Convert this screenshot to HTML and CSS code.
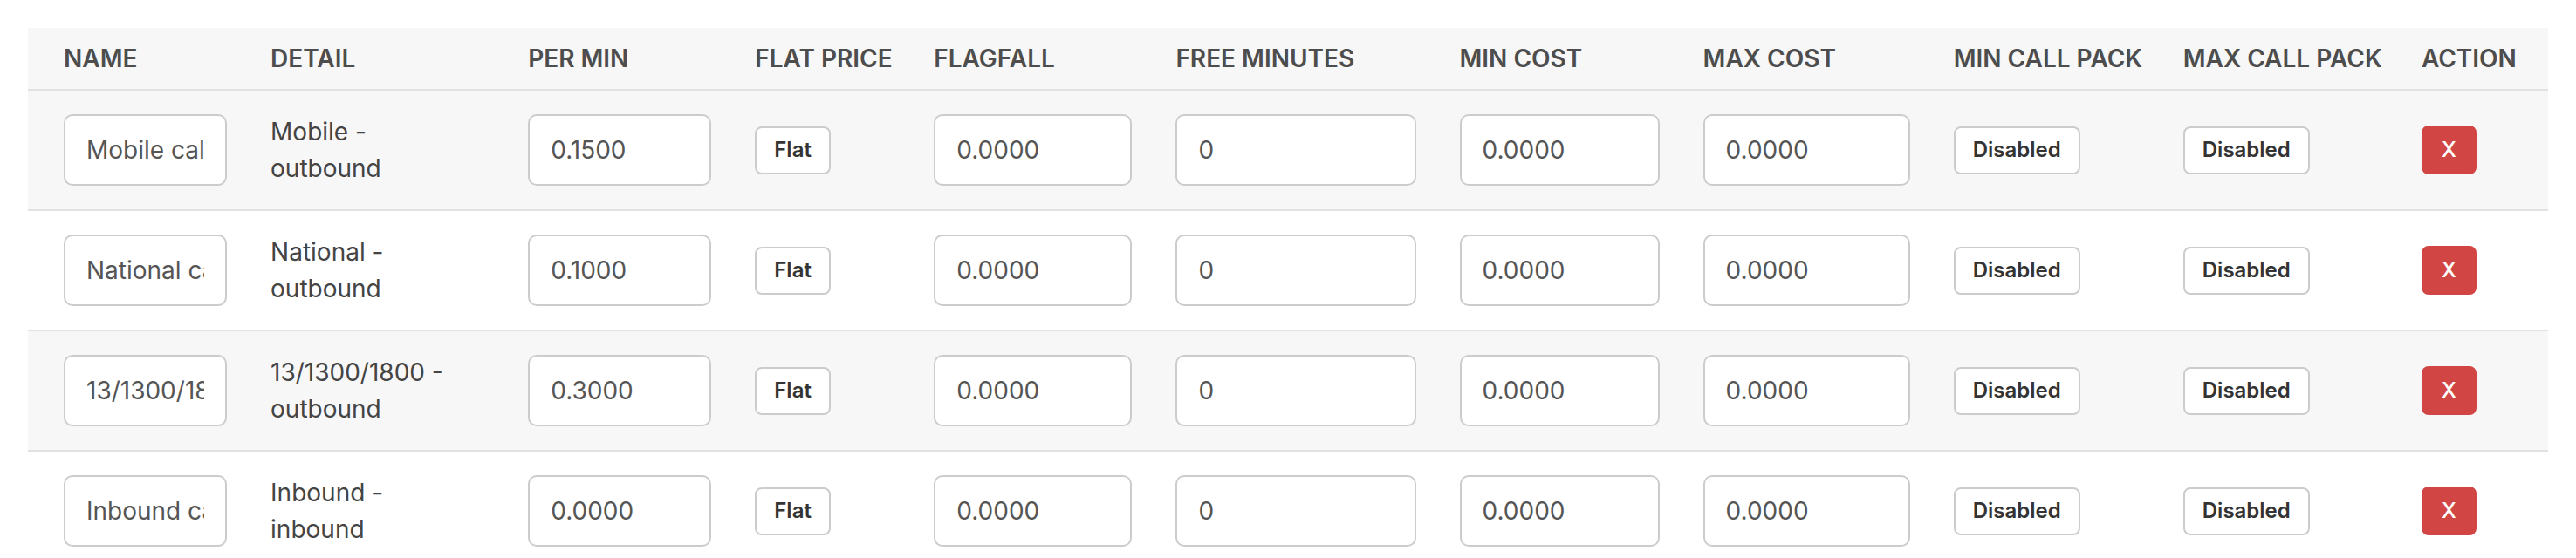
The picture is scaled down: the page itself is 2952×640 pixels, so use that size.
FILE: index.html
```html
<!DOCTYPE html>
<html lang="en">
<head>
<meta charset="utf-8">
<title>Call rates</title>
<link rel="stylesheet" href="styles.css">
</head>
<body>
<table class="rates">
  <colgroup>
    <col class="c-name"><col class="c-detail"><col class="c-permin"><col class="c-flat"><col class="c-flag">
    <col class="c-free"><col class="c-mincost"><col class="c-maxcost"><col class="c-minpack"><col class="c-maxpack"><col class="c-action">
  </colgroup>
  <thead>
    <tr>
      <th>Name</th><th>Detail</th><th>Per Min</th><th>Flat Price</th><th>Flagfall</th><th>Free Minutes</th>
      <th>Min Cost</th><th>Max Cost</th><th>Min Call Pack</th><th>Max Call Pack</th><th>Action</th>
    </tr>
  </thead>
  <tbody>
    <tr>
      <td><input class="field" type="text" value="Mobile calls"></td>
      <td><div class="detail">Mobile - outbound</div></td>
      <td><input class="field" type="text" value="0.1500"></td>
      <td><button class="btn">Flat</button></td>
      <td><input class="field" type="text" value="0.0000"></td>
      <td><input class="field" type="text" value="0"></td>
      <td><input class="field" type="text" value="0.0000"></td>
      <td><input class="field" type="text" value="0.0000"></td>
      <td><button class="btn">Disabled</button></td>
      <td><button class="btn">Disabled</button></td>
      <td><button class="btn btn-danger">X</button></td>
    </tr>
    <tr>
      <td><input class="field" type="text" value="National calls"></td>
      <td><div class="detail">National - outbound</div></td>
      <td><input class="field" type="text" value="0.1000"></td>
      <td><button class="btn">Flat</button></td>
      <td><input class="field" type="text" value="0.0000"></td>
      <td><input class="field" type="text" value="0"></td>
      <td><input class="field" type="text" value="0.0000"></td>
      <td><input class="field" type="text" value="0.0000"></td>
      <td><button class="btn">Disabled</button></td>
      <td><button class="btn">Disabled</button></td>
      <td><button class="btn btn-danger">X</button></td>
    </tr>
    <tr>
      <td><input class="field" type="text" value="13/1300/1800 calls"></td>
      <td><div class="detail">13/1300/1800 - outbound</div></td>
      <td><input class="field" type="text" value="0.3000"></td>
      <td><button class="btn">Flat</button></td>
      <td><input class="field" type="text" value="0.0000"></td>
      <td><input class="field" type="text" value="0"></td>
      <td><input class="field" type="text" value="0.0000"></td>
      <td><input class="field" type="text" value="0.0000"></td>
      <td><button class="btn">Disabled</button></td>
      <td><button class="btn">Disabled</button></td>
      <td><button class="btn btn-danger">X</button></td>
    </tr>
    <tr>
      <td><input class="field" type="text" value="Inbound calls"></td>
      <td><div class="detail">Inbound - inbound</div></td>
      <td><input class="field" type="text" value="0.0000"></td>
      <td><button class="btn">Flat</button></td>
      <td><input class="field" type="text" value="0.0000"></td>
      <td><input class="field" type="text" value="0"></td>
      <td><input class="field" type="text" value="0.0000"></td>
      <td><input class="field" type="text" value="0.0000"></td>
      <td><button class="btn">Disabled</button></td>
      <td><button class="btn">Disabled</button></td>
      <td><button class="btn btn-danger">X</button></td>
    </tr>
  </tbody>
</table>
</body>
</html>
```

FILE: styles.css
```css
html {
  overflow: hidden;
  background: #ffffff;
}

body {
  margin: 32px;
  font-family: Inter, "Noto Sans", "Liberation Sans", sans-serif;
  font-size: 28px;
  line-height: 1.5;
  color: #444444;
}

.rates {
  width: 100%;
  table-layout: fixed;
  border-collapse: collapse;
}

.c-name { width: 253px; }
.c-detail { width: 295px; }
.c-permin { width: 260px; }
.c-flat { width: 205px; }
.c-flag { width: 277px; }
.c-free { width: 325px; }
.c-mincost { width: 279px; }
.c-maxcost { width: 287px; }
.c-minpack { width: 263px; }
.c-maxpack { width: 273px; }
.c-action { width: 170px; }

.rates th {
  height: 70px;
  padding: 0 25px;
  text-align: left;
  text-transform: uppercase;
  font-weight: 600;
  font-size: 28px;
  color: #4d4d4d;
  white-space: nowrap;
  background: #f7f7f7;
  border-bottom: 2px solid #e2e2e2;
}

.rates td {
  height: 136px;
  padding: 0 25px;
  vertical-align: middle;
  border-bottom: 2px solid #e2e2e2;
}

.rates th:first-child,
.rates td:first-child {
  padding-left: 41px;
}

.rates th:last-child,
.rates td:last-child {
  padding-right: 41px;
}

.rates tbody tr:nth-child(odd) td {
  background: #f7f7f7;
}

.rates tbody tr:nth-child(even) td {
  background: #ffffff;
}

.detail {
  max-width: 232px;
  color: #444444;
}

.field {
  display: block;
  box-sizing: border-box;
  width: 100%;
  height: 82px;
  padding: 0 24px;
  font-family: inherit;
  font-size: 28px;
  color: #555555;
  background: #ffffff;
  border: 2px solid #cccccc;
  border-radius: 10px;
  outline: none;
}

.btn {
  box-sizing: border-box;
  height: 55px;
  padding: 0 20px;
  font-family: inherit;
  font-size: 24px;
  font-weight: 600;
  line-height: 1;
  color: #333333;
  background: #ffffff;
  border: 2px solid #cccccc;
  border-radius: 8px;
  cursor: pointer;
}

.btn-danger {
  height: 56px;
  padding: 0 21px;
  color: #ffffff;
  background: #d24545;
  border-color: #d24545;
  font-weight: 500;
}
```
